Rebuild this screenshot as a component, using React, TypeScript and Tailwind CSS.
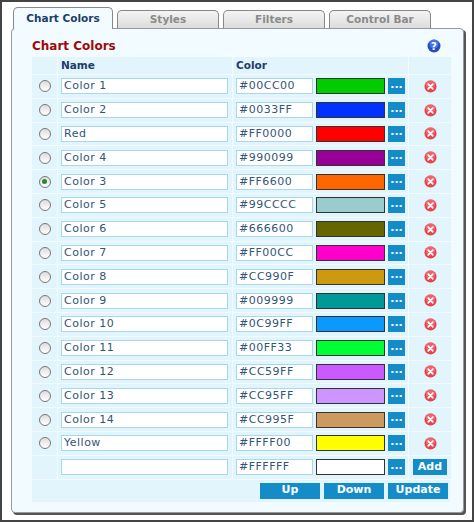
import React from "react";

const rows: [string, string, string][] = [
  ["Color 1", "#00CC00", "#00CC00"],
  ["Color 2", "#0033FF", "#0033FF"],
  ["Red", "#FF0000", "#FF0000"],
  ["Color 4", "#990099", "#990099"],
  ["Color 3", "#FF6600", "#FF6600"],
  ["Color 5", "#99CCCC", "#99CCCC"],
  ["Color 6", "#666600", "#666600"],
  ["Color 7", "#FF00CC", "#FF00CC"],
  ["Color 8", "#CC990F", "#CC990F"],
  ["Color 9", "#009999", "#009999"],
  ["Color 10", "#0C99FF", "#0C99FF"],
  ["Color 11", "#00FF33", "#00FF33"],
  ["Color 12", "#CC59FF", "#CC59FF"],
  ["Color 13", "#CC95FF", "#CC95FF"],
  ["Color 14", "#CC995F", "#CC995F"],
  ["Yellow", "#FFFF00", "#FFFF00"],
];

function Del() {
  return (
    <svg width="13" height="13" viewBox="0 0 14 14">
      <circle cx="7" cy="7" r="6.5" fill="#e8424a" />
      <circle cx="7" cy="5" r="5" fill="#f47a80" opacity="0.6" />
      <path d="M4.5 4.5 L9.5 9.5 M9.5 4.5 L4.5 9.5" stroke="#fff" strokeWidth="1.8" strokeLinecap="round" />
    </svg>
  );
}

function Radio({ on }: { on?: boolean }) {
  return (
    <div className="w-[12px] h-[12px] rounded-full border border-[#777] bg-gradient-to-b from-[#ddd] to-white flex items-center justify-center">
      {on && <div className="w-[5px] h-[5px] rounded-full bg-[#2a8a2a]" />}
    </div>
  );
}

const inp = "h-[16px] border border-[#a8d8ee] bg-white px-[2px] text-[11px] leading-[14px] text-[#335577] tracking-[0.5px]";
const btn = "bg-[#138cc8] text-white font-bold text-[11px] flex items-center justify-center";

export default function App() {
  return (
    <div className="w-[474px] h-[522px] bg-[#444] p-[2px]" style={{ fontFamily: "Verdana, 'DejaVu Sans', sans-serif" }}>
      <div className="w-full h-full bg-white pl-[9px] pt-[4px]">
        <div className="flex items-end gap-[4px] pl-[2px] h-[22px]">
          <div className="w-[100px] h-[22px] bg-[#f2fbff] border border-[#888] border-b-0 rounded-t-[5px] text-[10.5px] font-bold text-[#1d3d6a] flex items-center justify-center relative z-10 -mb-px">Chart Colors</div>
          {["Styles", "Filters", "Control Bar"].map((t) => (
            <div key={t} className="w-[102px] h-[18px] bg-gradient-to-b from-[#f4f4f4] to-[#dcdcdc] border border-[#888] border-b-0 rounded-t-[5px] text-[10.5px] font-bold text-[#8a8a8a] flex items-center justify-center">{t}</div>
          ))}
        </div>
        <div className="w-[453px] h-[485px] bg-[#f2fbff] border border-[#999] rounded-[4px] shadow-[2px_2px_0_#555] pl-[20px] pt-[9px]">
          <div className="flex items-center justify-between w-[417px] h-[16px]">
            <span className="text-[12px] font-bold text-[#a00a0a]">Chart Colors</span>
            <svg width="14" height="14" viewBox="0 0 14 14" className="mr-[8px]">
              <circle cx="7" cy="7" r="6.5" fill="#1f4fc0" />
              <circle cx="7" cy="5" r="4.5" fill="#5f8fff" opacity="0.6" />
              <text x="7" y="10.5" fontSize="10" fontWeight="bold" fill="#fff" textAnchor="middle" fontFamily="DejaVu Sans">?</text>
            </svg>
          </div>
          <div className="w-[418px] mt-[3px] grid grid-cols-[25px_174px_175px_42px] gap-[1px] text-[11px]">
            <div className="bg-[#e2f4fc] h-[17px]" />
            <div className="bg-[#e2f4fc] h-[17px] font-bold text-[#1d3d6a] pl-[3px] leading-[17px] text-[10.5px]">Name</div>
            <div className="bg-[#e2f4fc] h-[17px] font-bold text-[#1d3d6a] pl-[3px] leading-[17px] text-[10.5px]">Color</div>
            <div className="bg-[#e2f4fc] h-[17px]" />
            {rows.map(([n, h, c], i) => (
              <React.Fragment key={i}>
                <div className="bg-[#e2f4fc] h-[22.8px] flex items-center justify-center"><Radio on={i === 4} /></div>
                <div className="bg-[#e2f4fc] h-[22.8px] flex items-center pl-[3px]"><div className={inp + " w-[167px]"}>{n}</div></div>
                <div className="bg-[#e2f4fc] h-[22.8px] flex items-center pl-[3px] gap-[3px]">
                  <div className={inp + " w-[77px]"}>{h}</div>
                  <div className="w-[69px] h-[16px] border border-[#333]" style={{ background: c }} />
                  <div className={btn + " w-[17px] h-[16px] leading-none pb-[4px]"}>...</div>
                </div>
                <div className="bg-[#e2f4fc] h-[22.8px] flex items-center justify-center"><Del /></div>
              </React.Fragment>
            ))}
            <div className="bg-[#e2f4fc] h-[22.8px]" />
            <div className="bg-[#e2f4fc] h-[22.8px] flex items-center pl-[3px]"><div className={inp + " w-[167px]"} /></div>
            <div className="bg-[#e2f4fc] h-[22.8px] flex items-center pl-[3px] gap-[3px]">
              <div className={inp + " w-[77px]"}>#FFFFFF</div>
              <div className="w-[69px] h-[16px] border border-[#333] bg-white" />
              <div className={btn + " w-[17px] h-[16px] leading-none pb-[4px]"}>...</div>
            </div>
            <div className="bg-[#e2f4fc] h-[22.8px] flex items-center justify-center"><div className={btn + " w-[34px] h-[16px]"}>Add</div></div>
          </div>
          <div className="w-[418px] bg-[#e2f4fc] mt-[1px] h-[22px] flex items-center justify-end gap-[4px] pr-[2px]">
            <div className={btn + " w-[60px] h-[16px]"}>Up</div>
            <div className={btn + " w-[60px] h-[16px]"}>Down</div>
            <div className={btn + " w-[60px] h-[16px]"}>Update</div>
          </div>
        </div>
      </div>
    </div>
  );
}
